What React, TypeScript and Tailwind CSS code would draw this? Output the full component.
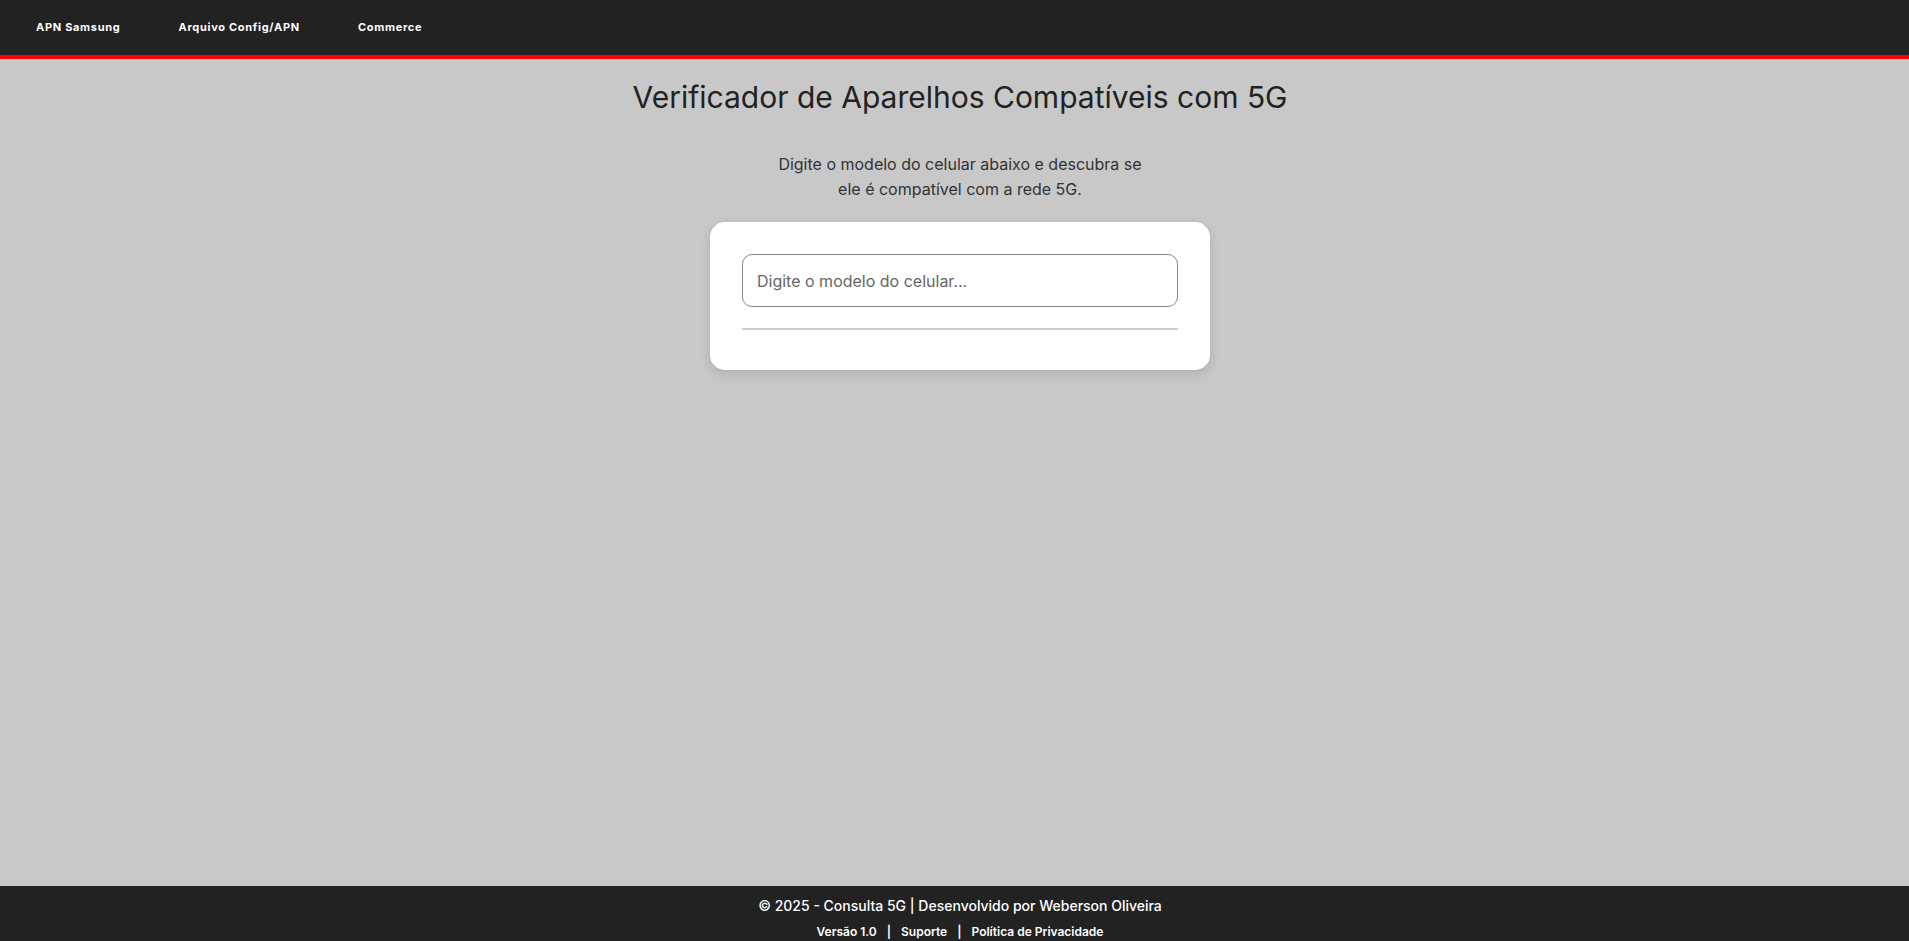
import React from "react";

const links = ["APN Samsung", "Arquivo Config/APN", "Commerce"];

export default function App() {
  return (
    <div
      className="min-h-screen flex flex-col bg-[#c8c8c8]"
      style={{ fontFamily: "Inter, 'Noto Sans', sans-serif" }}
    >
      {/* topo */}
      <header className="bg-[#222222] border-b-4 border-[#ff0000]">
        <nav className="h-[55px] flex items-center pl-[36px] gap-[58px]">
          {links.map((l) => (
            <a
              key={l}
              href="#"
              className="text-white text-[11px] font-bold tracking-[0.7px]"
            >
              {l}
            </a>
          ))}
        </nav>
      </header>

      <main className="flex-1 flex flex-col items-center pl-[11px]">
        <h1 className="mt-[16px] text-[30px] leading-[44px] text-[#222222] font-normal">
          Verificador de Aparelhos Compatíveis com 5G
        </h1>
        <p className="mt-[33px] w-[380px] text-center text-[16px] leading-[25px] text-[#333333]">
          Digite o modelo do celular abaixo e descubra se ele é compatível com a
          rede 5G.
        </p>

        <div className="mt-[20px] w-[500px] bg-white rounded-[15px] px-[32px] pt-[32px] pb-[40px] shadow-[0_4px_12px_rgba(0,0,0,0.12)]">
          <input
            type="text"
            placeholder="Digite o modelo do celular..."
            className="w-full h-[53px] border border-[#888888] rounded-[10px] px-[14px] text-[16px] text-[#333] placeholder:text-[#666666] outline-none"
          />
          <div className="mt-[21px] h-[2px] bg-[#cccccc]"></div>
        </div>
      </main>

      {/* rodapé */}
      <footer className="bg-[#222222] h-[55px] flex flex-col items-center pt-[8px] pl-[11px] text-white">
        <p className="text-[14px] font-medium leading-[24px]">
          © 2025 - Consulta 5G | Desenvolvido por Weberson Oliveira
        </p>
        <p className="mt-[4px] text-[12px] font-semibold leading-[20px] flex gap-[10px]">
          <a href="#">Versão 1.0</a>
          <span>|</span>
          <a href="#">Suporte</a>
          <span>|</span>
          <a href="#">Política de Privacidade</a>
        </p>
      </footer>
    </div>
  );
}
